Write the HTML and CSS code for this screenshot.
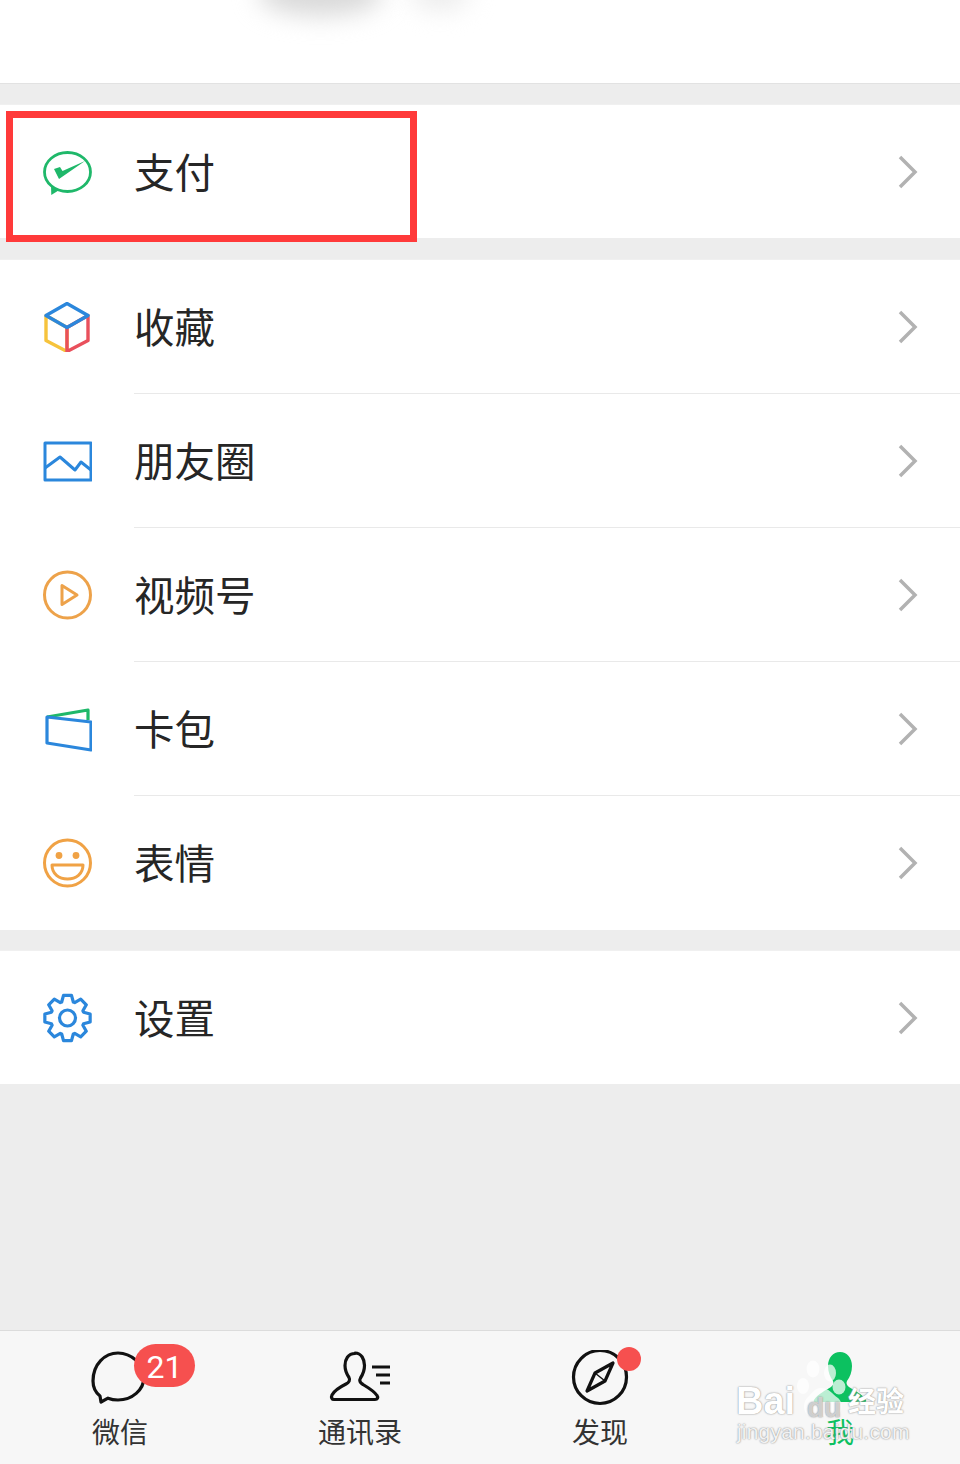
FILE: index.html
```html
<!DOCTYPE html>
<html lang="zh">
<head>
<meta charset="utf-8">
<title>我</title>
<link rel="stylesheet" href="styles.css">
</head>
<body>
<div class="page">
  <header class="profile">
    <div class="smudge smudge-a"></div>
    <div class="smudge smudge-b"></div>
  </header>

  <section class="group">
    <div class="row">
      <svg class="icon" viewBox="0 0 50 50"><ellipse cx="25.500" cy="25" rx="23" ry="19.500" fill="none" stroke="#1fb86a" stroke-width="2.800"/><path d="M9 38.500l.3 9.500 8-5z" fill="#1fb86a"/><path d="M12 22l6-2 2.500 4L43 14 17 32z" fill="#1fb86a"/></svg>
      <div class="row-body"><span class="label">支付</span><svg class="chevron" viewBox="0 0 20 34"><path d="M2 2l15 15L2 32"/></svg></div>
    </div>
  </section>

  <section class="group">
    <div class="row">
      <svg class="icon" viewBox="0 0 50 50" fill="none" stroke-width="3.400" stroke-linejoin="round" stroke-linecap="round"><path d="M4 13.500v25l21 11V25.500z" stroke="#f6c33c"/><path d="M46 13.500v25L25 49.500V25.500z" stroke="#e9505c"/><path d="M25 1.500L46 13.500 25 25.500 4 13.500z" stroke="#2b87dc"/></svg>
      <div class="row-body row-line"><span class="label">收藏</span><svg class="chevron" viewBox="0 0 20 34"><path d="M2 2l15 15L2 32"/></svg></div>
    </div>
    <div class="row">
      <svg class="icon" viewBox="0 0 50 50" fill="none" stroke="#2b87dc" stroke-width="3" stroke-linejoin="round"><rect x="3" y="7" width="46" height="37"/><path d="M3 32l15-11 15 13 6-8 10 8"/></svg>
      <div class="row-body row-line"><span class="label">朋友圈</span><svg class="chevron" viewBox="0 0 20 34"><path d="M2 2l15 15L2 32"/></svg></div>
    </div>
    <div class="row">
      <svg class="icon" viewBox="0 0 50 50" fill="none" stroke="#eda24a" stroke-width="3" stroke-linejoin="round"><circle cx="25.500" cy="25" r="23"/><path d="M20 15.500v19l15-9.500z"/></svg>
      <div class="row-body row-line"><span class="label">视频号</span><svg class="chevron" viewBox="0 0 20 34"><path d="M2 2l15 15L2 32"/></svg></div>
    </div>
    <div class="row">
      <svg class="icon" viewBox="0 0 50 50" stroke-width="3.200" fill="none" stroke-linejoin="round"><path d="M5 13L46 6v10" stroke="#1fb86a"/><path d="M5 13l44 5v28L5 39z" stroke="#2b87dc"/></svg>
      <div class="row-body row-line"><span class="label">卡包</span><svg class="chevron" viewBox="0 0 20 34"><path d="M2 2l15 15L2 32"/></svg></div>
    </div>
    <div class="row">
      <svg class="icon" viewBox="0 0 50 50" fill="none" stroke="#f0a245" stroke-width="3" stroke-linejoin="round"><circle cx="25.500" cy="25" r="23"/><circle cx="17" cy="17.500" r="3.400" fill="#f0a245" stroke="none"/><circle cx="34" cy="17.500" r="3.400" fill="#f0a245" stroke="none"/><path d="M10 27h31c0 9-7 14-15.500 14S10 36 10 27z"/></svg>
      <div class="row-body"><span class="label">表情</span><svg class="chevron" viewBox="0 0 20 34"><path d="M2 2l15 15L2 32"/></svg></div>
    </div>
  </section>

  <section class="group">
    <div class="row">
      <svg class="icon" viewBox="0 0 50 50" fill="none" stroke="#2b87dc" stroke-width="3.200" stroke-linejoin="round"><g transform="translate(25.500 25)"><circle r="8"/><path d="M-5.800-16L-4-22.650H4L5.800-16 7.200-15.400 13.200-18.800 18.800-13.200 15.400-7.200 16-5.800 22.650-4V4L16 5.800 15.400 7.200 18.800 13.200 13.200 18.800 7.200 15.400 5.800 16 4 22.650H-4L-5.800 16-7.200 15.400-13.200 18.800-18.800 13.200-15.400 7.200-16 5.800-22.650 4V-4L-16-5.800-15.400-7.200-18.800-13.200-13.200-18.800-7.200-15.400z"/></g></svg>
      <div class="row-body"><span class="label">设置</span><svg class="chevron" viewBox="0 0 20 34"><path d="M2 2l15 15L2 32"/></svg></div>
    </div>
  </section>

  <div class="spacer"></div>

  <nav class="tabbar">
    <div class="tab">
      <div class="tab-icon">
        <svg viewBox="0 0 64 56" fill="none" stroke="#111" stroke-width="3.200" stroke-linejoin="round"><path d="M12 46C7 42 5 37 5 31 5 14 17 3 30 3s26 11 26 24-12 23-26 23c-4 0-7-.6-10-1.800L13 52z"/></svg>
        <span class="badge">21</span>
      </div>
      <span class="tab-label">微信</span>
    </div>
    <div class="tab">
      <div class="tab-icon">
        <svg viewBox="0 0 64 56" fill="none" stroke="#111" stroke-width="3.200" stroke-linejoin="round" stroke-linecap="round"><path d="M27 3.500c-7 0-10 6-10 12 0 5 2 9 4 12 1.500 2.500 0 5-3 6.500-5 2.500-12 7-14 11-1.200 2.500 0 4.500 2 4.500h41c2.500 0 3.500-2 2-4-2.500-4-9-8-14-11-3-1.700-4-4-2.500-6.500 2-3 4-7.500 4-12.500 0-6-3-12.500-9.500-12.500z"/><path d="M44 17h18M48 25h14M52 33h10" stroke-linecap="butt"/></svg>
      </div>
      <span class="tab-label">通讯录</span>
    </div>
    <div class="tab">
      <div class="tab-icon">
        <svg viewBox="0 0 64 56" fill="none" stroke="#111" stroke-width="3.200" stroke-linejoin="round"><circle cx="32" cy="27" r="26.500"/><path d="M45 13L37 31 19 41l8-18z"/><path d="M27 23l10 8" stroke-width="1.500"/></svg>
        <span class="dot"></span>
      </div>
      <span class="tab-label">发现</span>
    </div>
    <div class="tab tab-active">
      <div class="tab-icon">
        <svg viewBox="0 0 64 56"><path d="M32 2c-7 0-12 6-12 14 0 6 2 11 5 15 1 2 .5 4-2 6-5 3-13 7-17 13-.5 1 0 2 1 2h50c1 0 1.500-1 1-2-4-6-12-10-17-13-2.500-2-3-4-2-6 3-4 5-9 5-15 0-8-5-14-12-14z" fill="#0cc160"/></svg>
      </div>
      <span class="tab-label">我</span>
    </div>
  </nav>

  <div class="callout"></div>

  <div class="watermark">
    <svg class="paw" viewBox="0 0 62 62"><g fill="#fff" fill-opacity=".72"><ellipse cx="7" cy="26" rx="6" ry="8"/><ellipse cx="17" cy="9" rx="6.500" ry="8.500"/><ellipse cx="34" cy="13" rx="6" ry="8.500"/><ellipse cx="43" cy="27" rx="6.500" ry="7.500"/><path d="M25 28c-6 0-9 5-13 9-6 5-6 19 5 20 4 0 7-1 10-1s7 2 11 1c9-1 10-14 4-19-6-4-9-10-17-10z"/></g></svg>
    <span class="wm-bai">Bai</span>
    <span class="wm-du">du</span>
    <span class="wm-jy">经验</span>
    <span class="wm-url">jingyan.baidu.com</span>
  </div>
</div>
</body>
</html>
```

FILE: styles.css
```css
* { box-sizing: border-box; }
html, body { margin: 0; padding: 0; }
body {
  font-family: "Noto Sans CJK SC", "Noto Sans", sans-serif;
  color: #222;
  background: #ededed;
}
.page {
  position: relative;
  width: 960px;
  height: 1464px;
  display: flex;
  flex-direction: column;
  overflow: hidden;
  background: #ededed;
}
.profile {
  position: relative;
  height: 84px;
  flex: none;
  background: #fff;
  border-bottom: 1px solid #e2e2e2;
  overflow: hidden;
}
.smudge {
  position: absolute;
  border-radius: 50%;
  filter: blur(12px);
}
.smudge-a { left: 258px; top: -30px; width: 125px; height: 46px; background: #d9d9d9; }
.smudge-b { left: 410px; top: -22px; width: 60px; height: 32px; background: #ececec; }
.group {
  flex: none;
  margin-top: 20px;
  background: #fff;
  border-top: 1px solid #f0f0f0;
}
.group:nth-of-type(2) { margin-top: 21px; }
.group:nth-of-type(3) { margin-top: 20px; }
.row {
  height: 134px;
  display: flex;
  align-items: center;
  padding-left: 42px;
}
.group .row:first-child { height: 133px; }
.group:nth-of-type(2) .row:first-child { height: 134px; }
.icon {
  width: 50px;
  height: 50px;
  flex: none;
  margin-right: 42px;
}
.row-body {
  flex: 1;
  align-self: stretch;
  display: flex;
  align-items: center;
  justify-content: space-between;
  padding-right: 42px;
}
.row-line { border-bottom: 1px solid #e9e9e9; }
.label {
  font-size: 40.500px;
  line-height: 54px;
  padding-bottom: 2px;
  color: #262626;
}
.chevron {
  width: 20px;
  height: 34px;
  fill: none;
  stroke: #b2b2b2;
  stroke-width: 3.500;
}
.spacer { flex: 1; }
.tabbar {
  height: 134px;
  flex: none;
  display: grid;
  grid-template-columns: repeat(4, 240px);
  padding-top: 19px;
  background: #f7f7f7;
  border-top: 1px solid #dcdcdc;
}
.tab {
  display: flex;
  flex-direction: column;
  align-items: center;
  gap: 5px;
}
.tab-icon {
  position: relative;
  width: 64px;
  height: 56px;
}
.tab-icon svg { display: block; width: 64px; height: 56px; }
.tab-label {
  font-size: 28px;
  line-height: 40px;
  color: #333;
}
.tab-active .tab-label { color: #0cc160; }
.badge {
  position: absolute;
  left: 46px;
  top: -6px;
  width: 61px;
  height: 43px;
  border-radius: 22px;
  background: #f6504f;
  color: #fff;
  font-family: Roboto, sans-serif;
  font-size: 32px;
  line-height: 46px;
  text-align: center;
}
.dot {
  position: absolute;
  left: 49px;
  top: -3px;
  width: 24px;
  height: 24px;
  border-radius: 50%;
  background: #f6504f;
}
.callout {
  position: absolute;
  left: 6px;
  top: 111px;
  width: 411px;
  height: 131px;
  border: 7px solid #ff3a3a;
}
.watermark {
  position: absolute;
  left: 736px;
  top: 1355px;
  width: 180px;
  height: 100px;
  color: #fff;
  font-family: "Liberation Sans", sans-serif;
  text-shadow: 0 0 2px rgba(150, 150, 150, .9), 0 0 1px rgba(150, 150, 150, .9);
}
.paw { position: absolute; left: 60px; top: 5px; width: 62px; height: 62px; }
.wm-bai { position: absolute; left: 0; top: 24px; font-size: 38px; line-height: 44px; font-weight: 700; }
.wm-du { position: absolute; left: 71px; top: 37px; font-size: 28px; line-height: 32px; font-weight: 700; color: rgba(255, 255, 255, .55); }
.wm-jy { position: absolute; left: 112px; top: 25px; font-family: "Noto Sans CJK SC", sans-serif; font-size: 28px; line-height: 40px; font-weight: 700; }
.wm-url { position: absolute; left: 1px; top: 64px; font-size: 21px; line-height: 26px; letter-spacing: .2px; color: rgba(255, 255, 255, .9); }
```
